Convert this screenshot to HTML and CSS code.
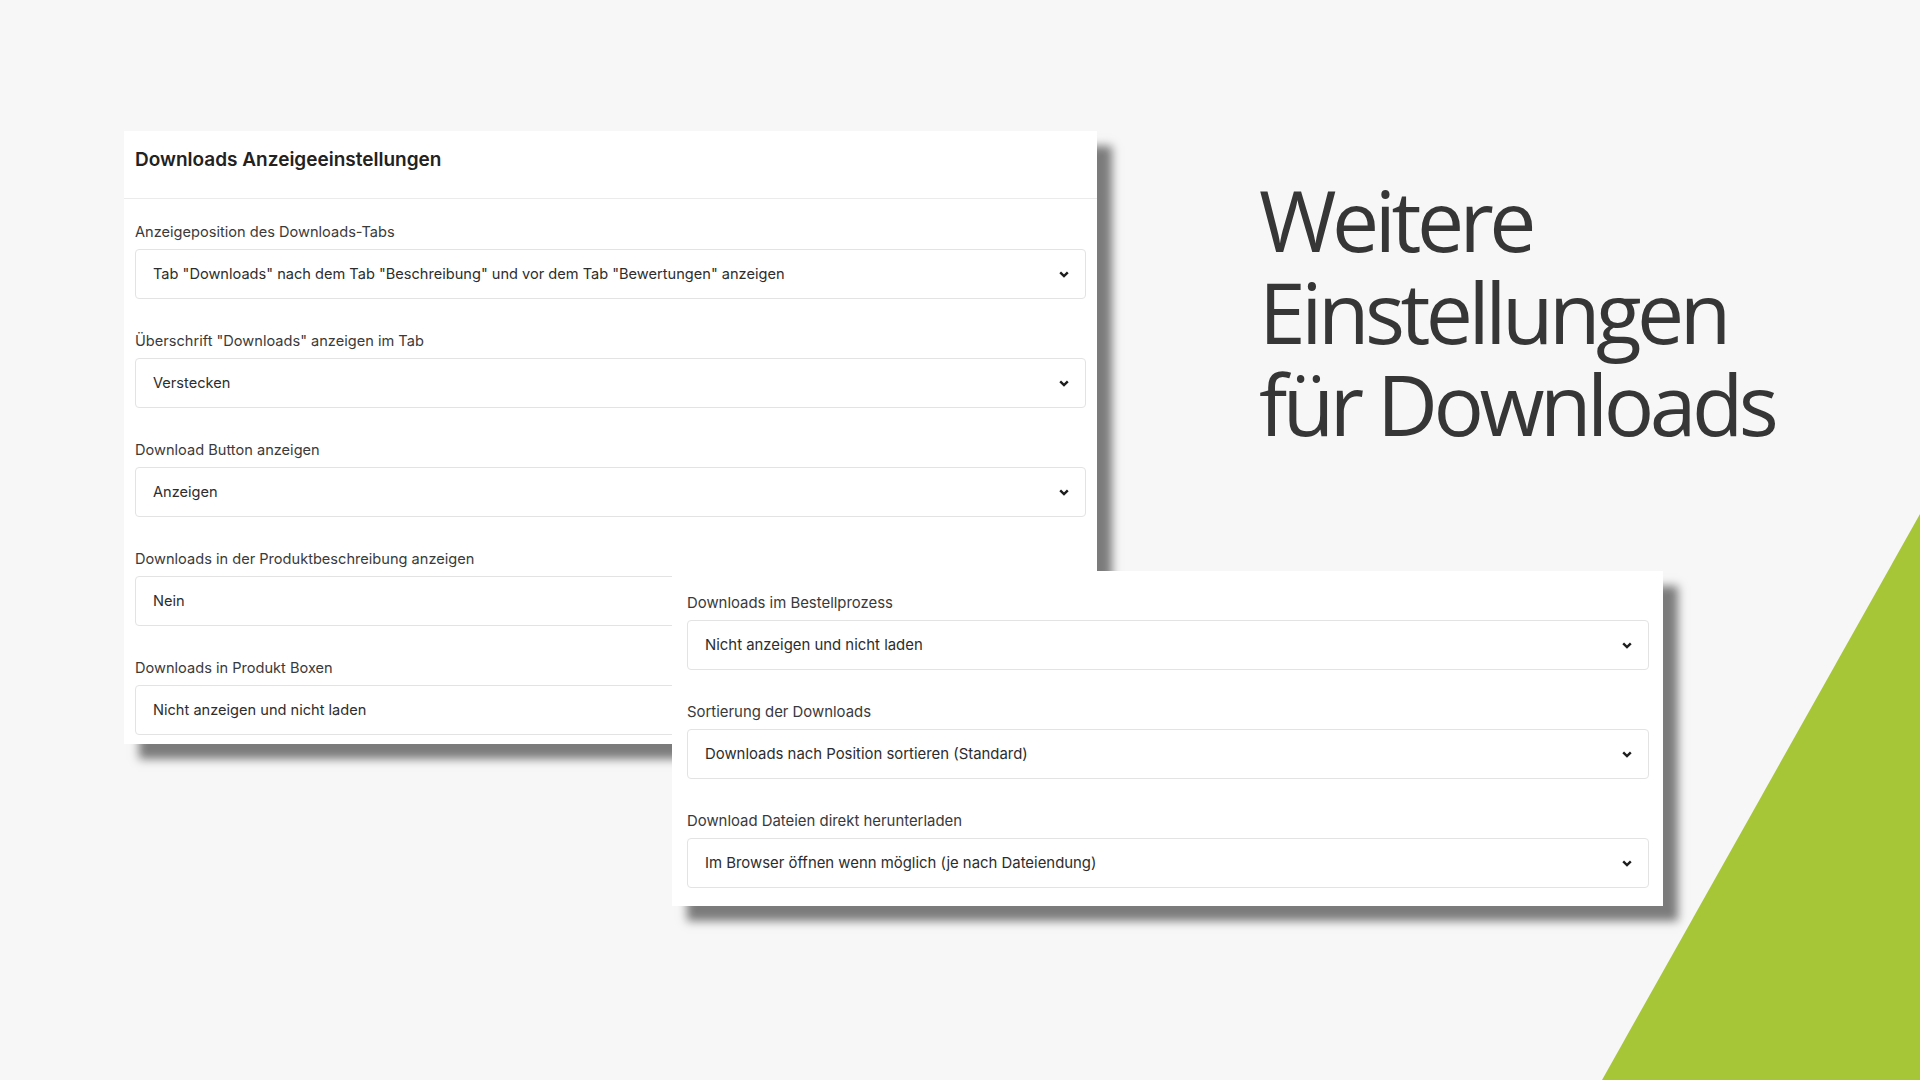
FILE: index.html
```html
<!DOCTYPE html>
<html lang="de">
<head>
    <meta charset="UTF-8">
    <meta name="viewport" content="width=device-width, initial-scale=1.0">
    <title>Weitere Einstellungen für Downloads</title>
    <link rel="stylesheet" href="styles.css">
</head>
<body>
    <div class="slide">
        <section class="card card-main">
            <div class="card-header">
                <h2>Downloads Anzeigeeinstellungen</h2>
            </div>
            <div class="card-body">
                <div class="field">
                    <label>Anzeigeposition des Downloads-Tabs</label>
                    <div class="select">
                        <span>Tab "Downloads" nach dem Tab "Beschreibung" und vor dem Tab "Bewertungen" anzeigen</span>
                        <svg class="chevron" viewBox="0 0 10 7"><path d="M1.2 1.3 L5 5.1 L8.8 1.3"/></svg>
                    </div>
                </div>
                <div class="field">
                    <label>Überschrift "Downloads" anzeigen im Tab</label>
                    <div class="select">
                        <span>Verstecken</span>
                        <svg class="chevron" viewBox="0 0 10 7"><path d="M1.2 1.3 L5 5.1 L8.8 1.3"/></svg>
                    </div>
                </div>
                <div class="field">
                    <label>Download Button anzeigen</label>
                    <div class="select">
                        <span>Anzeigen</span>
                        <svg class="chevron" viewBox="0 0 10 7"><path d="M1.2 1.3 L5 5.1 L8.8 1.3"/></svg>
                    </div>
                </div>
                <div class="field">
                    <label>Downloads in der Produktbeschreibung anzeigen</label>
                    <div class="select">
                        <span>Nein</span>
                        <svg class="chevron" viewBox="0 0 10 7"><path d="M1.2 1.3 L5 5.1 L8.8 1.3"/></svg>
                    </div>
                </div>
                <div class="field">
                    <label>Downloads in Produkt Boxen</label>
                    <div class="select">
                        <span>Nicht anzeigen und nicht laden</span>
                        <svg class="chevron" viewBox="0 0 10 7"><path d="M1.2 1.3 L5 5.1 L8.8 1.3"/></svg>
                    </div>
                </div>
            </div>
        </section>

        <section class="card card-extra">
            <div class="card-body">
                <div class="field">
                    <label>Downloads im Bestellprozess</label>
                    <div class="select">
                        <span>Nicht anzeigen und nicht laden</span>
                        <svg class="chevron" viewBox="0 0 10 7"><path d="M1.2 1.3 L5 5.1 L8.8 1.3"/></svg>
                    </div>
                </div>
                <div class="field">
                    <label>Sortierung der Downloads</label>
                    <div class="select">
                        <span>Downloads nach Position sortieren (Standard)</span>
                        <svg class="chevron" viewBox="0 0 10 7"><path d="M1.2 1.3 L5 5.1 L8.8 1.3"/></svg>
                    </div>
                </div>
                <div class="field">
                    <label>Download Dateien direkt herunterladen</label>
                    <div class="select">
                        <span>Im Browser öffnen wenn möglich (je nach Dateiendung)</span>
                        <svg class="chevron" viewBox="0 0 10 7"><path d="M1.2 1.3 L5 5.1 L8.8 1.3"/></svg>
                    </div>
                </div>
            </div>
        </section>

        <h1 class="headline">
            <span>Weitere</span>
            <span>Einstellungen</span>
            <span>für Downloads</span>
        </h1>

        <div class="corner"></div>
    </div>
</body>
</html>
```

FILE: styles.css
```css
body {
    margin: 0;
    background-color: #f7f7f7;
    font-family: 'Inter', 'Liberation Sans', sans-serif;
    color: #333;
}

/* Folie: feste 1920x1080 Bühne */
.slide {
    position: relative;
    width: 1920px;
    height: 1080px;
    overflow: hidden;
    display: grid;
    grid-template-columns: 124px 548px 425px 162px 404px 1fr;
    grid-template-rows: 131px 440px 174px 1fr;
}

.card {
    background-color: #fff;
    box-shadow: 15px 15px 9px rgba(0, 0, 0, 0.5);
    box-sizing: border-box;
    align-self: start;
}
.card-main {
    grid-column: 2 / 4;
    grid-row: 2 / 4;
    z-index: 1;
}
.card-extra {
    grid-column: 3 / 6;
    grid-row: 3 / 5;
    z-index: 2;
}

.card-header {
    height: 68px;
    padding: 0 11px 10px;
    display: flex;
    align-items: center;
    box-sizing: border-box;
    border-bottom: 1px solid #ebebeb;
}
.card-header h2 {
    margin: 0;
    font-size: 19px;
    font-weight: 600;
    color: #222;
}

.card-main .card-body {
    padding: 23px 11px 9px;
    font-size: 14.6px;
}
.card-extra .card-body {
    padding: 22px 14px 18px 15px;
    font-size: 14.9px;
}

.field + .field {
    margin-top: 32px;
}
.field label {
    display: block;
    line-height: 20px;
    margin-bottom: 7px;
    color: #3a3a3a;
}

.select {
    height: 50px;
    box-sizing: border-box;
    border: 1px solid #e3e3e3;
    border-radius: 4px;
    padding: 0 16px 0 17px;
    display: flex;
    align-items: center;
    justify-content: space-between;
    color: #2d2d2d;
}
.chevron {
    width: 10px;
    height: 7px;
    flex-shrink: 0;
}
.chevron path {
    fill: none;
    stroke: #1e1e1e;
    stroke-width: 2.4;
}

/* Überschrift rechts */
.headline {
    grid-column: 5 / 7;
    grid-row: 2;
    align-self: start;
    margin: 43px 0 0;
    font-family: 'Open Sans', sans-serif;
    font-weight: 400;
    font-size: 84px;
    line-height: 92px;
    letter-spacing: -4.5px;
    color: #363636;
}
.headline span {
    display: block;
    height: 92px;
    white-space: nowrap;
}

/* grüne Ecke unten rechts */
.corner {
    position: absolute;
    right: 0;
    bottom: 0;
    width: 318px;
    height: 566px;
    background-color: #a6c638;
    clip-path: polygon(100% 0, 100% 100%, 0 100%);
}
```
